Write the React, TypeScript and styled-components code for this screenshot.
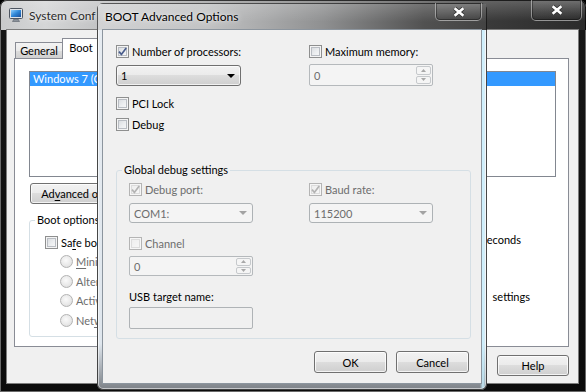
import React from "react";
import styled, { createGlobalStyle, css } from "styled-components";

const FONT = `Lato, "Noto Sans", "Liberation Sans", sans-serif`;

const GlobalStyle = createGlobalStyle`
  html, body { margin: 0; padding: 0; background: #000; }
  #root { width: 586px; height: 392px; }
  *, *::before, *::after { box-sizing: border-box; }
`;

const Desktop = styled.div`
  position: relative;
  width: 586px;
  height: 392px;
  overflow: hidden;
  background: #000;
  font-family: ${FONT};
  font-size: 11px;
  line-height: 15px;
  color: #000;
`;

/* ---------- window chrome ---------- */

const BackWindow = styled.div`
  position: absolute;
  z-index: 0;
  left: 0;
  top: 0;
  width: 586px;
  height: 392px;
  display: flex;
  flex-direction: column;
  border-radius: 7px 7px 0 0;
  overflow: hidden;
  background: linear-gradient(180deg, #171717 0%, #0b0b0b 100%);
  box-shadow: inset 0 0 0 1px #6a6a6a;
`;

const BackTitleBar = styled.div`
  height: 30px;
  flex: none;
  display: flex;
  align-items: center;
  padding: 0 4px 0 8px;
  border-radius: 7px 7px 0 0;
  background: linear-gradient(180deg, rgba(255, 255, 255, 0.22), rgba(255, 255, 255, 0) 70%),
    linear-gradient(90deg, #c8c9ca 0px, #d5d6d7 45px, #c3c4c5 97px, #7a7a7a 330px, #3a3a3a 487px, #2b2b2b 586px);
  box-shadow: inset 0 1px 0 rgba(0, 0, 0, 0.7), inset 1px 0 0 rgba(0, 0, 0, 0.7), inset -1px 0 0 rgba(0, 0, 0, 0.7);
`;

const TitleText = styled.span<{ $dim?: boolean; $ml?: number }>`
  font-size: 12px;
  margin-left: ${(p) => p.$ml ?? 0}px;
  color: ${(p) => (p.$dim ? "#2a2a2a" : "#000")};
  text-shadow: 0 0 6px rgba(255, 255, 255, 0.85), 0 0 2px rgba(255, 255, 255, 0.6);
  white-space: nowrap;
`;

const CloseButton = styled.div<{ $w: number; $h: number }>`
  width: ${(p) => p.$w}px;
  height: ${(p) => p.$h}px;
  flex: none;
  align-self: flex-start;
  margin-left: auto;
  display: flex;
  align-items: center;
  justify-content: center;
  border: 1px solid rgba(210, 210, 210, 0.55);
  border-top: none;
  border-radius: 0 0 5px 5px;
  background: linear-gradient(180deg, rgba(255, 255, 255, 0.14), rgba(255, 255, 255, 0.05) 50%, rgba(0, 0, 0, 0.06));
  box-shadow: inset 0 0 0 1px rgba(0, 0, 0, 0.35);
`;

const BackClient = styled.div`
  flex: 1;
  margin: 0 8px 9px 7px;
  background: #f0f0f0;
  display: flex;
  flex-direction: column;
  padding: 8px 9px 0 7px;
  box-shadow: 0 0 0 1px #7d7d7d;
`;

const FrontWindow = styled.div`
  position: absolute;
  z-index: 1;
  left: 97px;
  top: 3px;
  width: 390px;
  height: 387px;
  display: flex;
  flex-direction: column;
  border-radius: 6px;
  overflow: hidden;
  background: linear-gradient(90deg, rgba(255, 255, 255, 0) 383px, rgba(200, 240, 255, 0.95) 386px, rgba(255, 255, 255, 0) 389px),
    linear-gradient(180deg, #e7ecf1 0%, #dfe6ed 88%, #7b8086 100%);
  box-shadow: inset 0 0 0 1px rgba(40, 40, 40, 0.85), inset 0 0 0 2px rgba(255, 255, 255, 0.55);
`;

const FrontTitleBar = styled.div`
  height: 27px;
  flex: none;
  display: flex;
  align-items: center;
  padding: 0 5px 0 8px;
  background: linear-gradient(180deg, rgba(255, 255, 255, 0.2), rgba(255, 255, 255, 0) 70%),
    linear-gradient(90deg, #d2d3d4 0%, #c2c3c4 28%, #8f9091 58%, #515151 84%, #434343 100%);
  box-shadow: inset 0 1px 0 rgba(0, 0, 0, 0.6), inset 1px 0 0 rgba(0, 0, 0, 0.6), inset -1px 0 0 rgba(0, 0, 0, 0.6);
`;

const FrontClient = styled.div`
  flex: 1;
  margin: 0 6px 7px 6px;
  background: #f0f0f0;
  padding: 15px 10px 0 13px;
  display: flex;
  flex-direction: column;
  box-shadow: 0 0 0 1px #8c959e;
`;

/* ---------- tabs & list ---------- */

const TabStrip = styled.div`
  display: flex;
  align-items: flex-end;
  height: 21px;
  padding-left: 2px;
  margin-bottom: -1px;
  position: relative;
  z-index: 1;
`;

const Tab = styled.div<{ $active?: boolean; $w: number }>`
  width: ${(p) => p.$w}px;
  flex: none;
  display: flex;
  align-items: center;
  justify-content: center;
  border: 1px solid #898c95;
  border-bottom: none;
  white-space: nowrap;
  ${(p) =>
    p.$active
      ? css`
          height: 21px;
          margin-left: -1px;
          padding-bottom: 3px;
          background: #fff;
        `
      : css`
          height: 16px;
          margin-bottom: 1px;
          margin-left: -1px;
          background: linear-gradient(180deg, #f3f3f3 0%, #ebebeb 50%, #dddddd 51%, #cfcfcf 100%);
        `}
`;

const TabPanel = styled.div`
  height: 289px;
  flex: none;
  background: #fff;
  border: 1px solid #898c95;
  padding: 12px 12px 0 14px;
  display: flex;
  flex-direction: column;
`;

const ListBox = styled.div`
  height: 106px;
  flex: none;
  border: 1px solid #828790;
  background: #fff;
`;

const ListItem = styled.div<{ $selected?: boolean }>`
  height: 14px;
  line-height: 14px;
  padding-left: 3px;
  white-space: nowrap;
  background: ${(p) => (p.$selected ? "#3399ff" : "transparent")};
  color: ${(p) => (p.$selected ? "#fff" : "#000")};
`;

const LowerRow = styled.div`
  display: flex;
  margin-top: 9px;
`;

const SideColumn = styled.div`
  flex: 1;
  display: flex;
  flex-direction: column;
  align-items: flex-end;
  padding-top: 16px;
`;

const TimeoutRow = styled.div`
  display: flex;
  align-items: center;
  gap: 4px;
  height: 20px;
  margin-right: 35px;
  white-space: nowrap;
`;

const SmallInput = styled.div`
  width: 40px;
  height: 20px;
  border: 1px solid #abadb3;
  background: #fff;
  padding-left: 3px;
  line-height: 18px;
`;

const PermanentRow = styled.div`
  display: flex;
  align-items: flex-start;
  gap: 3px;
  margin-top: 41px;
  margin-right: 26px;
`;

const WrapLabel = styled.span`
  white-space: nowrap;
  line-height: 15px;
  margin-top: -1px;
  word-spacing: 3px;
`;

const FooterRow = styled.div<{ $mt: number; $pr: number }>`
  display: flex;
  justify-content: flex-end;
  gap: 9px;
  margin-top: ${(p) => p.$mt}px;
  padding-right: ${(p) => p.$pr}px;
`;

/* ---------- controls ---------- */

const PushButton = styled.div<{ $w: number; $h: number; $ml?: number; $mt?: number }>`
  width: ${(p) => p.$w}px;
  height: ${(p) => p.$h}px;
  flex: none;
  margin-left: ${(p) => p.$ml ?? 0}px;
  margin-top: ${(p) => p.$mt ?? 0}px;
  display: flex;
  align-items: center;
  justify-content: center;
  white-space: nowrap;
  border: 1px solid #707070;
  border-radius: 3px;
  background: linear-gradient(180deg, #f2f2f2 0%, #ebebeb 49%, #dddddd 50%, #cfcfcf 100%);
  box-shadow: inset 0 0 0 1px rgba(255, 255, 255, 0.75);
`;

const Group = styled.fieldset<{ $w?: number; $mt?: number }>`
  margin: ${(p) => p.$mt ?? 0}px 0 0 0;
  padding: 0;
  min-width: 0;
  ${(p) => (p.$w ? `width: ${p.$w}px; flex: none;` : "")}
  border: 1px solid #d5dfe5;
  border-radius: 3px;
`;

const GroupLegend = styled.legend`
  padding: 0 2px;
  margin-left: 5px;
  height: 14px;
  line-height: 14px;
  white-space: nowrap;
`;

const GroupBody = styled.div<{ $pad: string }>`
  padding: ${(p) => p.$pad};
  display: flex;
  flex-direction: column;
`;

const TwoCols = styled.div<{ $first: number }>`
  display: grid;
  grid-template-columns: ${(p) => p.$first}px 1fr;
`;

const Stack = styled.div`
  display: flex;
  flex-direction: column;
  align-items: flex-start;
`;

const CheckRow = styled.div<{ $mt?: number; $ml?: number; $disabled?: boolean }>`
  display: flex;
  align-items: center;
  gap: 3px;
  height: 13px;
  margin-top: ${(p) => p.$mt ?? 0}px;
  margin-left: ${(p) => p.$ml ?? 0}px;
  white-space: nowrap;
  color: ${(p) => (p.$disabled ? "#6d6d6d" : "#000")};
`;

const BoxShell = styled.span<{ $disabled?: boolean }>`
  width: 13px;
  height: 13px;
  flex: none;
  display: flex;
  align-items: center;
  justify-content: center;
  border: 1px solid ${(p) => (p.$disabled ? "#b4b4b4" : "#8e8f8f")};
  background: ${(p) =>
    p.$disabled
      ? "linear-gradient(135deg, #ececec, #f8f8f8)"
      : "linear-gradient(135deg, #d3d6da 0%, #eceef0 55%, #fbfbfb 100%)"};
  box-shadow: inset 0 0 0 1px ${(p) => (p.$disabled ? "#f6f6f6" : "#f4f4f4")},
    inset 0 0 0 2px ${(p) => (p.$disabled ? "#dcdcdc" : "#b9bdc3")};
`;

const RadioShell = styled.span`
  width: 13px;
  height: 13px;
  flex: none;
  border-radius: 50%;
  border: 1px solid #b3b3b3;
  background: radial-gradient(circle at 45% 40%, #fafafa 0%, #e9e9e9 55%, #d6d6d6 100%);
`;

const Combo = styled.div<{ $w: number; $h: number; $mt?: number; $disabled?: boolean }>`
  width: ${(p) => p.$w}px;
  height: ${(p) => p.$h}px;
  margin-top: ${(p) => p.$mt ?? 0}px;
  flex: none;
  display: flex;
  align-items: center;
  justify-content: space-between;
  padding: 0 5px 0 4px;
  border-radius: 3px;
  ${(p) =>
    p.$disabled
      ? css`
          border: 1px solid #adb2b5;
          background: #f4f4f4;
          color: #6d6d6d;
        `
      : css`
          border: 1px solid #707070;
          background: linear-gradient(180deg, #f2f2f2 0%, #ebebeb 49%, #dddddd 50%, #cfcfcf 100%);
          box-shadow: inset 0 0 0 1px rgba(255, 255, 255, 0.7);
          color: #000;
        `}
`;

const SpinBox = styled.div<{ $w: number; $h: number; $mt?: number }>`
  width: ${(p) => p.$w}px;
  height: ${(p) => p.$h}px;
  margin-top: ${(p) => p.$mt ?? 0}px;
  flex: none;
  display: flex;
  border: 1px solid #b5b9bc;
  border-radius: 2px;
  background: #f4f4f4;
`;

const SpinValue = styled.div`
  flex: 1;
  display: flex;
  align-items: center;
  padding-left: 4px;
  color: #6d6d6d;
`;

const SpinButtons = styled.div`
  width: 16px;
  flex: none;
  display: flex;
  flex-direction: column;
  gap: 1px;
  padding: 1px 1px 1px 0;
`;

const SpinButton = styled.div`
  flex: 1;
  display: flex;
  align-items: center;
  justify-content: center;
  border: 1px solid #c6c9cc;
  border-radius: 2px;
  background: #f5f5f5;
`;

const TextBox = styled.div<{ $w: number; $h: number; $mt?: number }>`
  width: ${(p) => p.$w}px;
  height: ${(p) => p.$h}px;
  margin-top: ${(p) => p.$mt ?? 0}px;
  border: 1px solid #afb3b6;
  border-radius: 2px;
  background: #f0f0f0;
`;

const FieldLabel = styled.div<{ $mt?: number }>`
  margin-top: ${(p) => p.$mt ?? 0}px;
  line-height: 15px;
  white-space: nowrap;
`;

const Acc = styled.u`
  text-decoration-thickness: 1px;
  text-underline-offset: 2px;
`;

/* ---------- drawings ---------- */

const AppIcon = () => (
  <svg width="16" height="16" viewBox="0 0 16 16">
    <defs>
      <linearGradient id="scr" x1="0" y1="0" x2="1" y2="1">
        <stop offset="0" stopColor="#8fd0ff" />
        <stop offset="0.5" stopColor="#2f86d6" />
        <stop offset="1" stopColor="#1b4f9a" />
      </linearGradient>
    </defs>
    <rect x="1.5" y="1.5" width="13" height="10" rx="1" fill="#dfe3e8" stroke="#4d5560" />
    <rect x="3" y="3" width="10" height="7" fill="url(#scr)" />
    <path d="M6 12h4l1.5 2.5h-7z" fill="#8b929b" stroke="#596069" strokeWidth="0.6" />
  </svg>
);

const CloseGlyph = () => (
  <svg width="12" height="10" viewBox="0 0 12 10">
    <path d="M1.6 1.2 L10.4 8.8 M10.4 1.2 L1.6 8.8" stroke="#333" strokeWidth="4.2" />
    <path d="M1.6 1.2 L10.4 8.8 M10.4 1.2 L1.6 8.8" stroke="#fff" strokeWidth="2.6" />
  </svg>
);

const CheckMark = ({ color }: { color: string }) => (
  <svg width="9" height="9" viewBox="0 0 9 9">
    <path d="M1 4.6 L3.4 7.4 L8.2 0.9" fill="none" stroke={color} strokeWidth="1.7" />
  </svg>
);

const CheckBox = ({ checked, disabled }: { checked?: boolean; disabled?: boolean }) => (
  <BoxShell $disabled={disabled}>{checked && <CheckMark color={disabled ? "#b3b3b3" : "#4a5d8c"} />}</BoxShell>
);

const DropArrow = ({ disabled }: { disabled?: boolean }) => (
  <svg width="8" height="4" viewBox="0 0 8 4">
    <path d="M0 0h8L4 4z" fill={disabled ? "#a3a3a3" : "#000"} />
  </svg>
);

const SpinArrow = ({ up }: { up?: boolean }) => (
  <svg width="5" height="3" viewBox="0 0 5 3">
    <path d={up ? "M0 3h5L2.5 0z" : "M0 0h5L2.5 3z"} fill="#a8a8a8" />
  </svg>
);

const Spinner = ({ w, h, mt }: { w: number; h: number; mt?: number }) => (
  <SpinBox $w={w} $h={h} $mt={mt}>
    <SpinValue>0</SpinValue>
    <SpinButtons>
      <SpinButton>
        <SpinArrow up />
      </SpinButton>
      <SpinButton>
        <SpinArrow />
      </SpinButton>
    </SpinButtons>
  </SpinBox>
);

/* ---------- app ---------- */

export default function App() {
  return (
    <Desktop>
      <GlobalStyle />
      {/* background window: only the parts left uncovered by the dialog carry text */}
      <BackWindow>
        <BackTitleBar>
          <AppIcon />
          <TitleText $dim $ml={5}>
            System Conf
          </TitleText>
          <CloseButton $w={51} $h={21}>
            <CloseGlyph />
          </CloseButton>
        </BackTitleBar>
        <BackClient>
          <TabStrip>
            <Tab $w={48}>General</Tab>
            <Tab $w={38} $active>
              Boot
            </Tab>
          </TabStrip>
          <TabPanel>
            <ListBox>
              <ListItem $selected>Windows 7 (C</ListItem>
            </ListBox>
            <PushButton $w={117} $h={21} $ml={1} $mt={6}>
              <span>
                Ad<Acc>v</Acc>anced options...
              </span>
            </PushButton>
            <LowerRow>
              <Group $w={300}>
                <GroupLegend>Boot options</GroupLegend>
                <GroupBody $pad="9px 8px 9px 15px">
                  <CheckRow>
                    <CheckBox />
                    <span>
                      Sa<Acc>f</Acc>e boot
                    </span>
                  </CheckRow>
                  <CheckRow $mt={6} $ml={15} $disabled>
                    <RadioShell />
                    <span>
                      <Acc>M</Acc>inim
                    </span>
                  </CheckRow>
                  <CheckRow $mt={7} $ml={15} $disabled>
                    <RadioShell />
                    <span>Alter</span>
                  </CheckRow>
                  <CheckRow $mt={6} $ml={15} $disabled>
                    <RadioShell />
                    <span>Activ</span>
                  </CheckRow>
                  <CheckRow $mt={7} $ml={15} $disabled>
                    <RadioShell />
                    <span>
                      Net<Acc>w</Acc>
                    </span>
                  </CheckRow>
                </GroupBody>
              </Group>
              <SideColumn>
                <TimeoutRow>
                  <span>Timeout:</span>
                  <SmallInput>30</SmallInput>
                  <span>seconds</span>
                </TimeoutRow>
                <PermanentRow>
                  <CheckBox />
                  <WrapLabel>
                    Make all boot settings
                    <br />
                    permanent
                  </WrapLabel>
                </PermanentRow>
              </SideColumn>
            </LowerRow>
          </TabPanel>
          <FooterRow $mt={8} $pr={0}>
            <PushButton $w={72} $h={21}>
              Help
            </PushButton>
          </FooterRow>
        </BackClient>
      </BackWindow>

      <FrontWindow>
        <FrontTitleBar>
          <TitleText>BOOT Advanced Options</TitleText>
          <CloseButton $w={47} $h={18}>
            <CloseGlyph />
          </CloseButton>
        </FrontTitleBar>
        <FrontClient>
          <TwoCols $first={193}>
            <Stack>
              <CheckRow>
                <CheckBox checked />
                <span>Number of processors:</span>
              </CheckRow>
              <Combo $w={125} $h={21} $mt={7}>
                <span>1</span>
                <DropArrow />
              </Combo>
            </Stack>
            <Stack>
              <CheckRow>
                <CheckBox />
                <span>Maximum memory:</span>
              </CheckRow>
              <Spinner w={124} h={22} mt={6} />
            </Stack>
          </TwoCols>
          <CheckRow $mt={11}>
            <CheckBox />
            <span>PCI Lock</span>
          </CheckRow>
          <CheckRow $mt={8}>
            <CheckBox />
            <span>Debug</span>
          </CheckRow>
          <Group $mt={32}>
            <GroupLegend>Global debug settings</GroupLegend>
            <GroupBody $pad="6px 9px 9px 12px">
              <TwoCols $first={180}>
                <Stack>
                  <CheckRow $disabled>
                    <CheckBox checked disabled />
                    <span>Debug port:</span>
                  </CheckRow>
                  <Combo $w={124} $h={20} $mt={7} $disabled>
                    <span>COM1:</span>
                    <DropArrow disabled />
                  </Combo>
                </Stack>
                <Stack>
                  <CheckRow $disabled>
                    <CheckBox checked disabled />
                    <span>Baud rate:</span>
                  </CheckRow>
                  <Combo $w={124} $h={20} $mt={7} $disabled>
                    <span>115200</span>
                    <DropArrow disabled />
                  </Combo>
                </Stack>
              </TwoCols>
              <CheckRow $mt={14} $disabled>
                <CheckBox disabled />
                <span>Channel</span>
              </CheckRow>
              <Spinner w={124} h={20} mt={6} />
              <FieldLabel $mt={13}>USB target name:</FieldLabel>
              <TextBox $w={124} $h={22} $mt={3} />
            </GroupBody>
          </Group>
          <FooterRow $mt={12} $pr={2}>
            <PushButton $w={73} $h={22}>
              OK
            </PushButton>
            <PushButton $w={73} $h={22}>
              Cancel
            </PushButton>
          </FooterRow>
        </FrontClient>
      </FrontWindow>
    </Desktop>
  );
}
